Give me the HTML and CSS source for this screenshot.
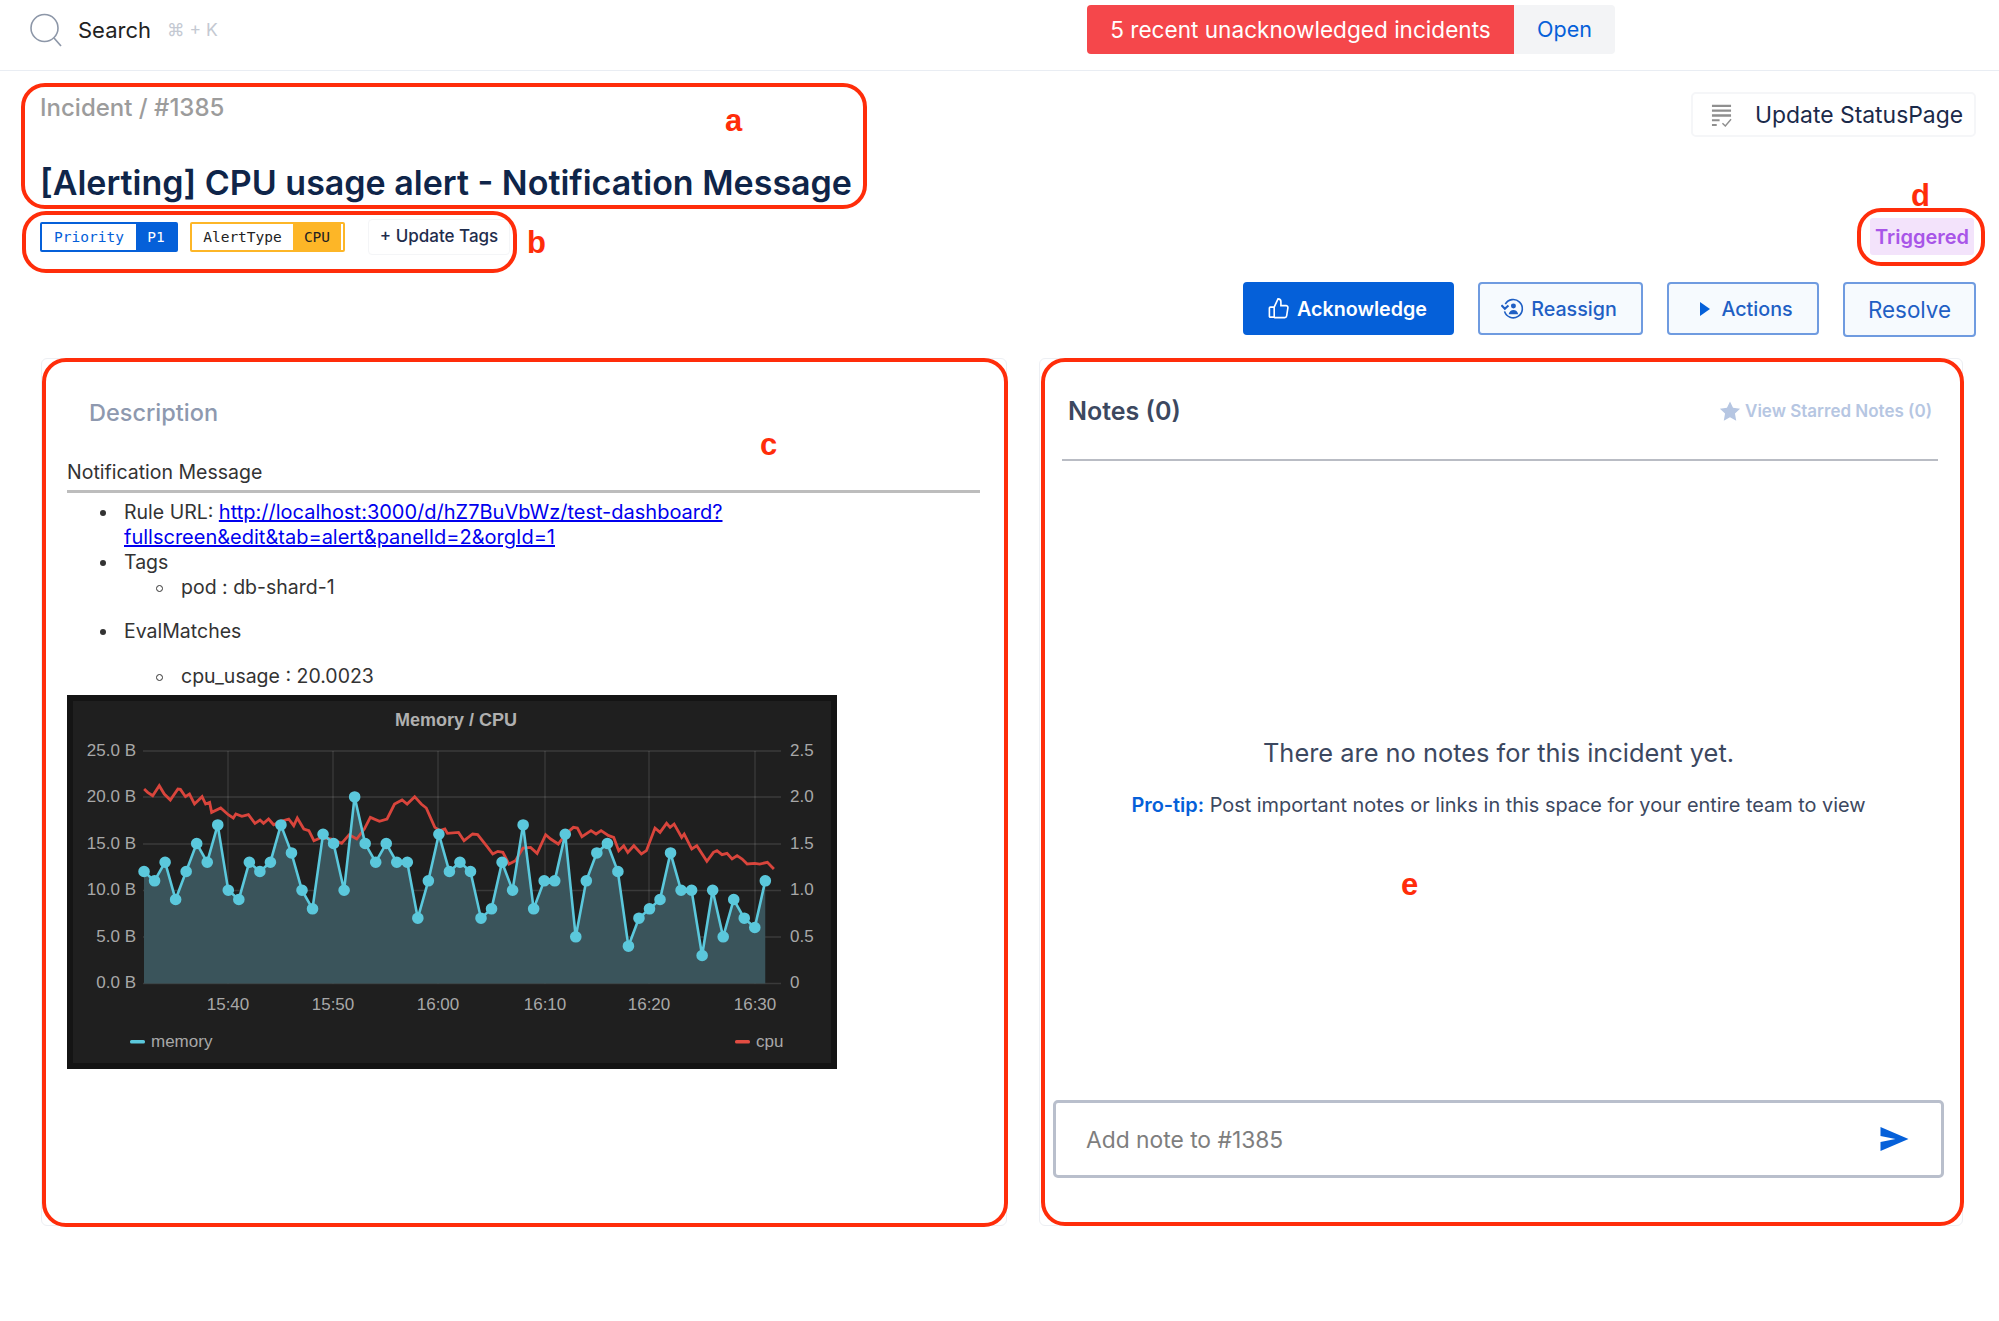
FILE: index.html
```html
<!DOCTYPE html>
<html>
<head>
<meta charset="utf-8"/>
<title>Incident #1385</title>
<link rel="stylesheet" href="styles.css">
</head>
<body>

<header class="topbar">
  <div class="search">
    <svg class="search-icon" viewBox="0 0 34 34"><circle cx="15.5" cy="15" r="13.5"/><path d="M25 25l7 8"/></svg>
    <span class="search-label">Search</span>
    <span class="search-key">⌘ + K</span>
  </div>
  <div class="alert">
    <span class="alert-text">5 recent unacknowledged incidents</span>
    <a class="alert-open">Open</a>
  </div>
</header>

<section class="head">
  <div class="head-left">
    <div class="crumb">Incident / #1385</div>
    <h1 class="title">[Alerting] CPU usage alert - Notification Message</h1>
    <div class="tags">
      <span class="tag tag-blue"><span class="tag-key">Priority</span><span class="tag-val">P1</span></span>
      <span class="tag tag-amber"><span class="tag-key">AlertType</span><span class="tag-val">CPU</span></span>
      <span class="tag-add">+ Update Tags</span>
    </div>
  </div>
  <div class="head-right">
    <button class="status-btn">
      <svg class="status-icon" viewBox="0 0 22 24"><path d="M1 2h20M1 7h20M1 12h20" stroke="#8f8f8f" stroke-width="2.4"/><path d="M1 17h8M1 22h5" stroke="#8f8f8f" stroke-width="2.2"/><path d="M12 20l3 3 6-7" stroke="#8f8f8f" stroke-width="1.5" fill="none"/></svg>
      Update StatusPage
    </button>
    <span class="state">Triggered</span>
  </div>
</section>

<section class="actions">
  <button class="btn btn-primary">
    <svg class="btn-icon" viewBox="0 0 24 24"><path d="M7.5 10.5V21H3.500a1 1 0 0 1-1-1v-8.500a1 1 0 0 1 1-1zM7.500 10.500l4-8.500c1.700 0 3 1.300 3 3v4h5.300a2 2 0 0 1 2 2.300l-1.300 8.500a2 2 0 0 1-2 1.700H7.500"/></svg>
    Acknowledge
  </button>
  <button class="btn btn-reassign">
    <svg class="btn-icon" viewBox="0 0 24 24"><path d="M4.500 7.500a9.500 9.500 0 1 1-.8 7.500"/><path d="M.5 8.500l3.500 3.800 3.800-3.500" stroke-width="2.200"/><circle cx="13" cy="9.500" r="2.600" fill="currentColor" stroke="none"/><path d="M8 18c.6-3 2.600-4.500 5-4.500s4.400 1.500 5 4.500z" fill="currentColor" stroke="none"/></svg>
    Reassign
  </button>
  <button class="btn btn-actions">
    <svg class="btn-play" viewBox="0 0 10 14"><path d="M0 0l10 7-10 7z"/></svg>
    Actions
  </button>
  <button class="btn btn-resolve">Resolve</button>
</section>

<main class="columns">
  <div class="card card-desc">
    <h2 class="desc-title">Description</h2>
    <div class="desc-body">
      <div class="desc-heading">Notification Message</div>
      <ul class="desc-list">
        <li class="item">Rule URL: <a href="#">http://localhost:3000/d/hZ7BuVbWz/test-dashboard?<br>fullscreen&amp;edit&amp;tab=alert&amp;panelId=2&amp;orgId=1</a></li>
        <li class="item">Tags
          <ul class="sub-tags"><li class="subitem">pod : db-shard-1</li></ul>
        </li>
        <li class="item">EvalMatches
          <ul class="sub-evals"><li class="subitem">cpu_usage : 20.0023</li></ul>
        </li>
      </ul>

      <svg class="chart" viewBox="0 0 770 374">
        <rect width="770" height="374" fill="#141414"/>
        <rect x="6" y="6" width="758" height="362" fill="#1f1f1f"/>
        <text class="chart-title" x="389" y="31" text-anchor="middle">Memory / CPU</text>

        <g class="chart-grid">
          <path d="M76 56H714M76 102H714M76 149H714M76 195.500H714M76 242H714M76 288.500H714"/>
          <path d="M161 56V288.500M266 56V288.500M371 56V288.500M478 56V288.500M582 56V288.500M688 56V288.500"/>
        </g>

        <g class="chart-label" text-anchor="end">
          <text x="69" y="61">25.0 B</text>
          <text x="69" y="107">20.0 B</text>
          <text x="69" y="154">15.0 B</text>
          <text x="69" y="200">10.0 B</text>
          <text x="69" y="247">5.0 B</text>
          <text x="69" y="293">0.0 B</text>
        </g>
        <g class="chart-label">
          <text x="723" y="61">2.5</text>
          <text x="723" y="107">2.0</text>
          <text x="723" y="154">1.5</text>
          <text x="723" y="200">1.0</text>
          <text x="723" y="247">0.5</text>
          <text x="723" y="293">0</text>
        </g>
        <g class="chart-label" text-anchor="middle">
          <text x="161" y="315">15:40</text>
          <text x="266" y="315">15:50</text>
          <text x="371" y="315">16:00</text>
          <text x="478" y="315">16:10</text>
          <text x="582" y="315">16:20</text>
          <text x="688" y="315">16:30</text>
        </g>

        <!-- memory, x = minutes from 15:32, y = bytes -->
        <g transform="translate(77 288.500) scale(10.530 -9.330)">
          <path class="mem-area" d="M0 0L0 12 1 11 2 13 3 9 4 12 5 15 6 13 7 17 8 10 9 9 10 13 11 12 12 13 13 17 14 14 15 10 16 8 17 16 18 15 19 10 20 20 21 15 22 13 23 15 24 13 25 13 26 7 27 11 28 16 29 12 30 13 31 12 32 7 33 8 34 13 35 10 36 17 37 8 38 11 39 11 40 16 41 5 42 11 43 14 44 15 45 12 46 4 47 7 48 8 49 9 50 14 51 10 52 10 53 3 54 10 55 5 56 9 57 7 58 6 59 11 59 0z"/>
        </g>

        <!-- cpu traced off the panel -->
        <g transform="translate(-7.500 -4.300) scale(.5038 .3333)">
          <polyline class="cpu-line" points="168,295 175,305 185,315 198,285 208,310 220,328 235,295 240,296 250,318 258,310 268,340 283,318 290,340 298,335 302,365 320,352 335,372 345,382 350,370 362,377 375,372 388,398 398,388 405,398 415,385 425,402 440,392 455,385 465,405 472,382 485,415 495,420 505,450 520,440 540,445 560,458 575,432 590,445 605,415 617,380 635,392 650,385 665,340 680,328 690,340 705,318 718,340 728,352 745,410 755,420 765,415 770,428 792,425 803,450 820,430 830,432 850,470 860,490 870,482 880,485 892,520 905,510 920,472 935,470 948,488 965,432 975,445 990,460 1005,430 1020,410 1028,412 1037,438 1055,420 1065,430 1075,420 1090,435 1100,440 1110,480 1120,465 1128,485 1140,465 1155,490 1165,480 1182,412 1192,425 1205,398 1212,410 1220,400 1235,440 1240,430 1255,475 1265,465 1285,512 1298,485 1305,480 1315,492 1325,488 1335,505 1345,495 1355,505 1365,520 1380,518 1390,520 1405,515 1418,535"/>
        </g>

        <g transform="translate(77 288.500) scale(10.530 -9.330)">
          <polyline class="mem-line" points="0,12 1,11 2,13 3,9 4,12 5,15 6,13 7,17 8,10 9,9 10,13 11,12 12,13 13,17 14,14 15,10 16,8 17,16 18,15 19,10 20,20 21,15 22,13 23,15 24,13 25,13 26,7 27,11 28,16 29,12 30,13 31,12 32,7 33,8 34,13 35,10 36,17 37,8 38,11 39,11 40,16 41,5 42,11 43,14 44,15 45,12 46,4 47,7 48,8 49,9 50,14 51,10 52,10 53,3 54,10 55,5 56,9 57,7 58,6 59,11"/>
          <path class="mem-dots" d="M0 12h.01M1 11h.01M2 13h.01M3 9h.01M4 12h.01M5 15h.01M6 13h.01M7 17h.01M8 10h.01M9 9h.01M10 13h.01M11 12h.01M12 13h.01M13 17h.01M14 14h.01M15 10h.01M16 8h.01M17 16h.01M18 15h.01M19 10h.01M20 20h.01M21 15h.01M22 13h.01M23 15h.01M24 13h.01M25 13h.01M26 7h.01M27 11h.01M28 16h.01M29 12h.01M30 13h.01M31 12h.01M32 7h.01M33 8h.01M34 13h.01M35 10h.01M36 17h.01M37 8h.01M38 11h.01M39 11h.01M40 16h.01M41 5h.01M42 11h.01M43 14h.01M44 15h.01M45 12h.01M46 4h.01M47 7h.01M48 8h.01M49 9h.01M50 14h.01M51 10h.01M52 10h.01M53 3h.01M54 10h.01M55 5h.01M56 9h.01M57 7h.01M58 6h.01M59 11h.01"/>
        </g>

        <rect x="63" y="345" width="15" height="3.500" rx="1.500" fill="#5bc8dc"/>
        <text class="chart-label" x="84" y="352">memory</text>
        <rect x="668" y="345" width="15" height="3.500" rx="1.500" fill="#e24d42"/>
        <text class="chart-label" x="689" y="352">cpu</text>
      </svg>
    </div>
  </div>

  <div class="card card-notes">
    <div class="notes-head">
      <h2 class="notes-title">Notes (0)</h2>
      <a class="notes-starred">
        <svg class="star" viewBox="0 0 24 24"><path d="M12 1.500l3.300 7 7.700 1-5.600 5.300 1.400 7.700-6.800-3.800-6.800 3.800 1.400-7.700L1 9.500l7.700-1z"/></svg>
        View Starred Notes (0)
      </a>
    </div>
    <div class="notes-empty">
      <p class="empty-main">There are no notes for this incident yet.</p>
      <p class="empty-tip"><b>Pro-tip:</b> Post important notes or links in this space for your entire team to view</p>
    </div>
    <div class="note-input">
      <span class="note-placeholder">Add note to #1385</span>
      <svg class="send" viewBox="0 0 28 24"><path d="M0 0l28 12L0 24l0-9 15-3L0 9z"/></svg>
    </div>
  </div>
</main>

<!-- red callouts drawn over the screenshot -->
<div class="mark mark-a"></div>
<div class="mark mark-b"></div>
<div class="mark mark-c"></div>
<div class="mark mark-d"></div>
<div class="mark mark-e"></div>
<span class="letter letter-a">a</span>
<span class="letter letter-b">b</span>
<span class="letter letter-c">c</span>
<span class="letter letter-d">d</span>
<span class="letter letter-e">e</span>

</body>
</html>
```

FILE: styles.css
```css
body {
  margin: 0;
  position: relative;
  height: 1321px;
  overflow: hidden;
  background: #fff;
  font-family: Inter, "Noto Sans", sans-serif;
  color: #1b2a4a;
}

button {
  font-family: inherit;
}

/* top bar */
.topbar {
  display: grid;
  grid-template-columns: 1058px auto;
  height: 65px;
  padding: 5px 0 0 29px;
  border-bottom: 1px solid #e9edf3;
}

.search {
  display: flex;
  align-items: center;
  height: 49px;
}

.search-icon {
  width: 34px;
  height: 34px;
  fill: none;
  stroke: #8d97a8;
  stroke-width: 1.6;
}

.search-label {
  margin-left: 15px;
  font-size: 22px;
  color: #222;
}

.search-key {
  margin-left: 16px;
  font-size: 17.5px;
  color: #c4c9d2;
}

.alert {
  display: flex;
  height: 49px;
  width: 528px;
  line-height: 49px;
  font-size: 22.6px;
  border-radius: 4px;
  overflow: hidden;
}

.alert-text {
  width: 427px;
  text-align: center;
  background: #f5474b;
  color: #fff;
}

.alert-open {
  flex: 1;
  text-align: center;
  background: #f3f4f6;
  color: #0560d9;
  font-size: 21.5px;
}

/* title block */
.head {
  display: flex;
  justify-content: space-between;
  padding: 0 23px 0 40px;
}

.crumb {
  margin-top: 22px;
  line-height: 30px;
  font-size: 24px;
  font-weight: 500;
  color: #9c9c9c;
}

.title {
  margin: 38px 0 0;
  line-height: 44px;
  font-size: 34px;
  font-weight: 600;
  color: #0f2549;
}

.tags {
  display: flex;
  align-items: center;
  height: 36px;
  margin-top: 14px;
}

.tag {
  display: flex;
  height: 30px;
  box-sizing: border-box;
  border: 2px solid;
  border-radius: 2px;
  font-family: "DejaVu Sans Mono", monospace;
  font-size: 14.5px;
  line-height: 26px;
}

.tag-key {
  text-align: center;
}

.tag-val {
  flex: 1;
  text-align: center;
}

.tag-blue {
  width: 138px;
  border-color: #0560d9;
  color: #0560d9;
}

.tag-blue .tag-key {
  width: 94px;
}

.tag-blue .tag-val {
  background: #0560d9;
  color: #fff;
}

.tag-amber {
  width: 155px;
  margin-left: 12px;
  border-color: #fdb627;
  color: #222;
}

.tag-amber .tag-key {
  width: 101px;
}

.tag-amber .tag-val {
  margin-right: 2px;
  background: #fdb627;
}

.tag-add {
  height: 36px;
  width: 142px;
  margin-left: 23px;
  box-sizing: border-box;
  border: 1px solid #f4f5f7;
  border-radius: 4px;
  line-height: 33px;
  text-align: center;
  font-size: 17px;
  font-weight: 500;
  color: #1f2d4d;
}

.head-right {
  display: flex;
  flex-direction: column;
  justify-content: space-between;
  align-items: flex-end;
  padding-top: 21px;
}

.status-btn {
  display: flex;
  align-items: center;
  width: 285px;
  height: 45px;
  padding: 1px 0 0 18px;
  background: #fff;
  border: 2px solid #f5f6f8;
  border-radius: 5px;
  font-size: 22.9px;
  color: #1b2a4a;
}

.status-icon {
  width: 21px;
  height: 23px;
  margin-right: 23px;
}

.state {
  width: 104px;
  height: 37px;
  margin-right: 2px;
  background: #f3e3fb;
  border-radius: 3px;
  line-height: 39px;
  text-align: center;
  font-size: 20px;
  font-weight: 600;
  color: #a855e8;
}

/* action buttons */
.actions {
  display: flex;
  justify-content: flex-end;
  align-items: flex-start;
  margin-top: 27px;
  padding-right: 23px;
}

.btn {
  display: flex;
  align-items: center;
  justify-content: center;
  height: 53px;
  padding: 0;
  border: 2px solid #6f9be0;
  border-radius: 4px;
  background: #f6fafe;
  color: #1f5fc4;
  font-size: 19.7px;
  font-weight: 500;
}

.btn-primary {
  width: 211px;
  padding-right: 3px;
  background: #0560d9;
  border-color: #0560d9;
  color: #fff;
  font-weight: 600;
}

.btn-reassign {
  width: 165px;
  padding-right: 3px;
  margin-left: 24px;
}

.btn-actions {
  width: 152px;
  padding-left: 7px;
  margin-left: 24px;
}

.btn-resolve {
  width: 133px;
  height: 55px;
  margin-left: 24px;
  font-size: 22.4px;
  font-weight: 400;
}

.btn-icon {
  width: 23px;
  height: 23px;
  margin-right: 7px;
  fill: none;
  stroke: currentColor;
  stroke-width: 1.7;
}

.btn-play {
  width: 10px;
  height: 14px;
  margin-right: 11px;
  fill: #0560d9;
}

/* columns */
.columns {
  display: grid;
  grid-template-columns: 966px 924px;
  column-gap: 32px;
  height: 868px;
  margin: 21px 0 0 41px;
}

.card {
  box-sizing: border-box;
  border: 1px solid #edeff3;
  border-radius: 6px;
}

.desc-title {
  margin: 39px 0 0 47px;
  line-height: 30px;
  font-size: 23.5px;
  font-weight: 500;
  color: #8e99af;
}

.desc-body {
  margin: 32px 26px 0 25px;
  font-size: 19.5px;
  color: #333;
}

.desc-heading {
  line-height: 24px;
  padding-bottom: 6px;
  border-bottom: 3px solid #bdbdbd;
}

.desc-list {
  margin: 7px 0 0;
  padding-left: 57px;
  line-height: 25px;
  list-style: none;
}

.desc-list a {
  font-size: 20px;
  color: #0000ee;
}

.desc-list ul {
  padding-left: 57px;
  list-style: none;
}

.item::before {
  content: "";
  display: inline-block;
  width: 6px;
  height: 6px;
  margin: 0 18px 3px -24px;
  border-radius: 50%;
  background: #333;
}

.subitem::before {
  content: "";
  display: inline-block;
  box-sizing: border-box;
  width: 7px;
  height: 7px;
  margin: 0 18px 2px -25px;
  border: 1.5px solid #333;
  border-radius: 50%;
}

.sub-tags {
  margin: 0 0 19px;
}

.sub-evals {
  margin: 20px 0 6px;
}

.chart {
  display: block;
  width: 770px;
  height: 374px;
  font-family: "Liberation Sans", sans-serif;
}

.chart-title {
  font-size: 18px;
  font-weight: 700;
  fill: #b0b0b0;
}

.chart-label {
  font-size: 17px;
  fill: #a8a8a8;
}

.chart-grid {
  fill: none;
  stroke: #fff;
  stroke-opacity: .12;
  stroke-width: 1.300;
}

.mem-area {
  fill: #3a545b;
}

.mem-line,
.mem-dots,
.cpu-line {
  fill: none;
  vector-effect: non-scaling-stroke;
}

.mem-line {
  stroke: #5bc8dc;
  stroke-width: 2.600;
}

.mem-dots {
  stroke: #5bc8dc;
  stroke-width: 11.500;
  stroke-linecap: round;
}

.cpu-line {
  stroke: #d9453c;
  stroke-width: 2.800;
}

/* notes */
.card-notes {
  display: flex;
  flex-direction: column;
  padding: 0 18px 47px 13px;
}

.notes-head {
  display: flex;
  justify-content: space-between;
  align-items: center;
  height: 102px;
  margin: 0 6px 0 9px;
  padding: 3px 6px 0 6px;
  box-sizing: border-box;
  border-bottom: 2px solid #b9bcc4;
}

.notes-title {
  margin: 0;
  font-size: 25px;
  font-weight: 600;
  color: #3c4860;
}

.notes-starred {
  display: flex;
  align-items: center;
  font-size: 17px;
  font-weight: 600;
  color: #b6c6e2;
}

.star {
  width: 22px;
  height: 22px;
  margin-right: 4px;
  fill: #b6c6e2;
}

.notes-empty {
  flex: 1;
  text-align: center;
  color: #3c4860;
}

.empty-main {
  margin: 277px 0 0;
  line-height: 30px;
  font-size: 25.4px;
}

.empty-tip {
  margin: 22px 0 0;
  line-height: 30px;
  font-size: 19.9px;
}

.empty-tip b {
  color: #0560d9;
  font-weight: 600;
}

.note-input {
  display: flex;
  align-items: center;
  justify-content: space-between;
  height: 78px;
  box-sizing: border-box;
  padding: 0 32px 0 30px;
  border: 3px solid #b9bfcc;
  border-radius: 5px;
}

.note-placeholder {
  font-size: 22.8px;
  color: #7e7e7e;
}

.send {
  width: 29px;
  height: 24px;
  fill: #0560d9;
}

/* callouts */
.mark {
  position: absolute;
  box-sizing: border-box;
  border: 4px solid #ff2d0a;
  border-radius: 24px;
}

.mark-a { left: 21px; top: 83px; width: 846px; height: 126px; }
.mark-b { left: 22px; top: 211px; width: 495px; height: 62px; }
.mark-c { left: 42px; top: 358px; width: 966px; height: 869px; }
.mark-d { left: 1857px; top: 208px; width: 128px; height: 58px; }
.mark-e { left: 1041px; top: 358px; width: 923px; height: 868px; }

.letter {
  position: absolute;
  font-family: "Liberation Sans", sans-serif;
  font-size: 31px;
  font-weight: 700;
  line-height: 36px;
  color: #ff2d0a;
}

.letter-a { left: 725px; top: 103px; }
.letter-b { left: 527px; top: 225px; }
.letter-c { left: 760px; top: 427px; }
.letter-d { left: 1911px; top: 178px; }
.letter-e { left: 1401px; top: 867px; }
```
